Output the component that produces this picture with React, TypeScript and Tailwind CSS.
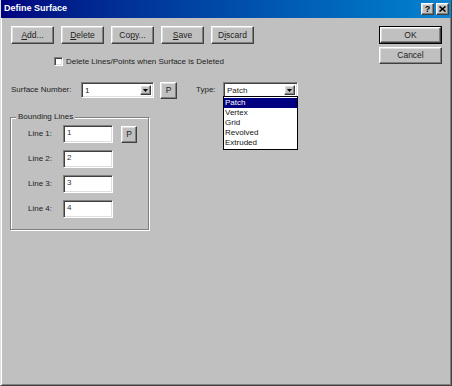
import type { ReactNode } from "react";

const raised =
  "border border-t-white border-l-white border-r-[#404040] border-b-[#404040] shadow-[inset_-1px_-1px_0_#808080,inset_1px_1px_0_#dfdfdf] bg-[#c0c0c0]";
const sunken =
  "border border-t-[#808080] border-l-[#808080] border-r-white border-b-white shadow-[inset_1px_1px_0_#404040,inset_-1px_-1px_0_#dfdfdf] bg-white";

function Button({
  children,
  className = "",
}: {
  children: ReactNode;
  className?: string;
}) {
  return (
    <div
      className={`${raised} flex items-center justify-center text-[8.5px] leading-none text-[#222] ${className}`}
    >
      {children}
    </div>
  );
}

function Combo({ value, className = "" }: { value: string; className?: string }) {
  return (
    <div className={`${sunken} flex h-[16px] items-stretch p-[2px] ${className}`}>
      <span className="flex-1 pl-[1px] text-[8px] leading-[11px] text-[#222]">{value}</span>
      <span className={`${raised} flex w-[11px] items-center justify-center`}>
        <svg width="5" height="3" viewBox="0 0 5 3">
          <path d="M0 0h5L2.5 3z" fill="#000" />
        </svg>
      </span>
    </div>
  );
}

function Field({ value }: { value: string }) {
  return (
    <div className={`${sunken} h-[18px] w-[50px] px-[3px] pt-[2px] text-[8px] leading-[10px] text-[#333]`}>
      {value}
    </div>
  );
}

export default function App() {
  const types = ["Patch", "Vertex", "Grid", "Revolved", "Extruded"];

  return (
    <div className="relative flex h-[386px] w-[452px] flex-col border-l border-b border-r border-l-[#dfdfdf] border-b-[#404040] border-r-[#404040] bg-[#c0c0c0] font-['Liberation_Sans',Arial,sans-serif] shadow-[inset_1px_0_0_#fff,inset_-1px_-1px_0_#808080]">
      {/* title bar */}
      <div className="flex h-[18px] items-center bg-gradient-to-r from-[#000080] to-[#1084d0] pl-[3px] pr-[2px]">
        <span className="flex-1 text-[9px] font-bold text-white">Define Surface</span>
        <div className="flex gap-[2px]">
          <div className={`${raised} flex h-[12px] w-[13px] items-center justify-center text-[9px] font-bold leading-none text-black`}>
            ?
          </div>
          <div className={`${raised} flex h-[12px] w-[13px] items-center justify-center`}>
            <svg width="7" height="6" viewBox="0 0 7 6">
              <path d="M0.5 0.5l6 5M6.5 0.5l-6 5" stroke="#000" strokeWidth="1.6" />
            </svg>
          </div>
        </div>
      </div>

      <div className="flex pt-[8px]">
        {/* left column */}
        <div className="flex-1 pl-[9px]">
          <div className="flex gap-[7px] pl-[1px]">
            <Button className="h-[18px] w-[43px]">
              <span><u>A</u>dd...</span>
            </Button>
            <Button className="h-[18px] w-[43px]">
              <span><u>D</u>elete</span>
            </Button>
            <Button className="h-[18px] w-[43px]">
              <span>Co<u>p</u>y...</span>
            </Button>
            <Button className="h-[18px] w-[43px]">
              <span><u>S</u>ave</span>
            </Button>
            <Button className="h-[18px] w-[43px]">
              <span>D<u>i</u>scard</span>
            </Button>
          </div>

          <div className="mt-[13px] flex items-center pl-[44px]">
            <div className={`${sunken} h-[9px] w-[9px]`} />
            <span className="ml-[3px] text-[8px] leading-[9px] text-[#222]">
              Delete Lines/Points when Surface is Deleted
            </span>
          </div>

          <div className="mt-[15px] flex h-[18px] items-center">
            <span className="ml-[1px] w-[70px] text-[8px] text-[#222]">Surface Number:</span>
            <Combo value="1" className="w-[73px]" />
            <Button className="ml-[6px] h-[17px] w-[17px]">P</Button>
            <span className="ml-[19px] w-[27px] text-[8px] text-[#222]">Type:</span>
            <div className="relative">
              <Combo value="Patch" className="w-[75px]" />
              <div className="absolute left-0 top-[14px] z-10 w-[75px] border border-black bg-white py-[1px]">
                {types.map((t, i) => (
                  <div
                    key={t}
                    className={`h-[10px] pl-[1px] text-[8px] leading-[10px] ${
                      i === 0 ? "bg-[#000080] text-white" : "text-[#111]"
                    }`}
                  >
                    {t}
                  </div>
                ))}
              </div>
            </div>
          </div>

          {/* bounding lines group */}
          <div className="relative mt-[18px] h-[113px] w-[139px] border border-[#808080] shadow-[1px_1px_0_#fff,inset_1px_1px_0_#fff]">
            <span className="absolute left-[5px] top-[-6px] bg-[#c0c0c0] px-[2px] text-[8px] leading-[10px] text-[#222]">
              Bounding Lines
            </span>
            <div className="flex flex-col gap-[7px] pl-[17px] pt-[7px]">
              {["1", "2", "3", "4"].map((n) => (
                <div key={n} className="flex h-[18px] items-center">
                  <span className="w-[35px] text-[8px] text-[#222]">Line {n}:</span>
                  <Field value={n} />
                  {n === "1" && <Button className="ml-[8px] h-[17px] w-[16px]">P</Button>}
                </div>
              ))}
            </div>
          </div>
        </div>

        {/* right column */}
        <div className="mr-[9px] flex w-[63px] flex-col gap-[3px]">
          <div className="border border-black">
            <Button className="h-[16px]">OK</Button>
          </div>
          <Button className="h-[17px]">Cancel</Button>
        </div>
      </div>
    </div>
  );
}
